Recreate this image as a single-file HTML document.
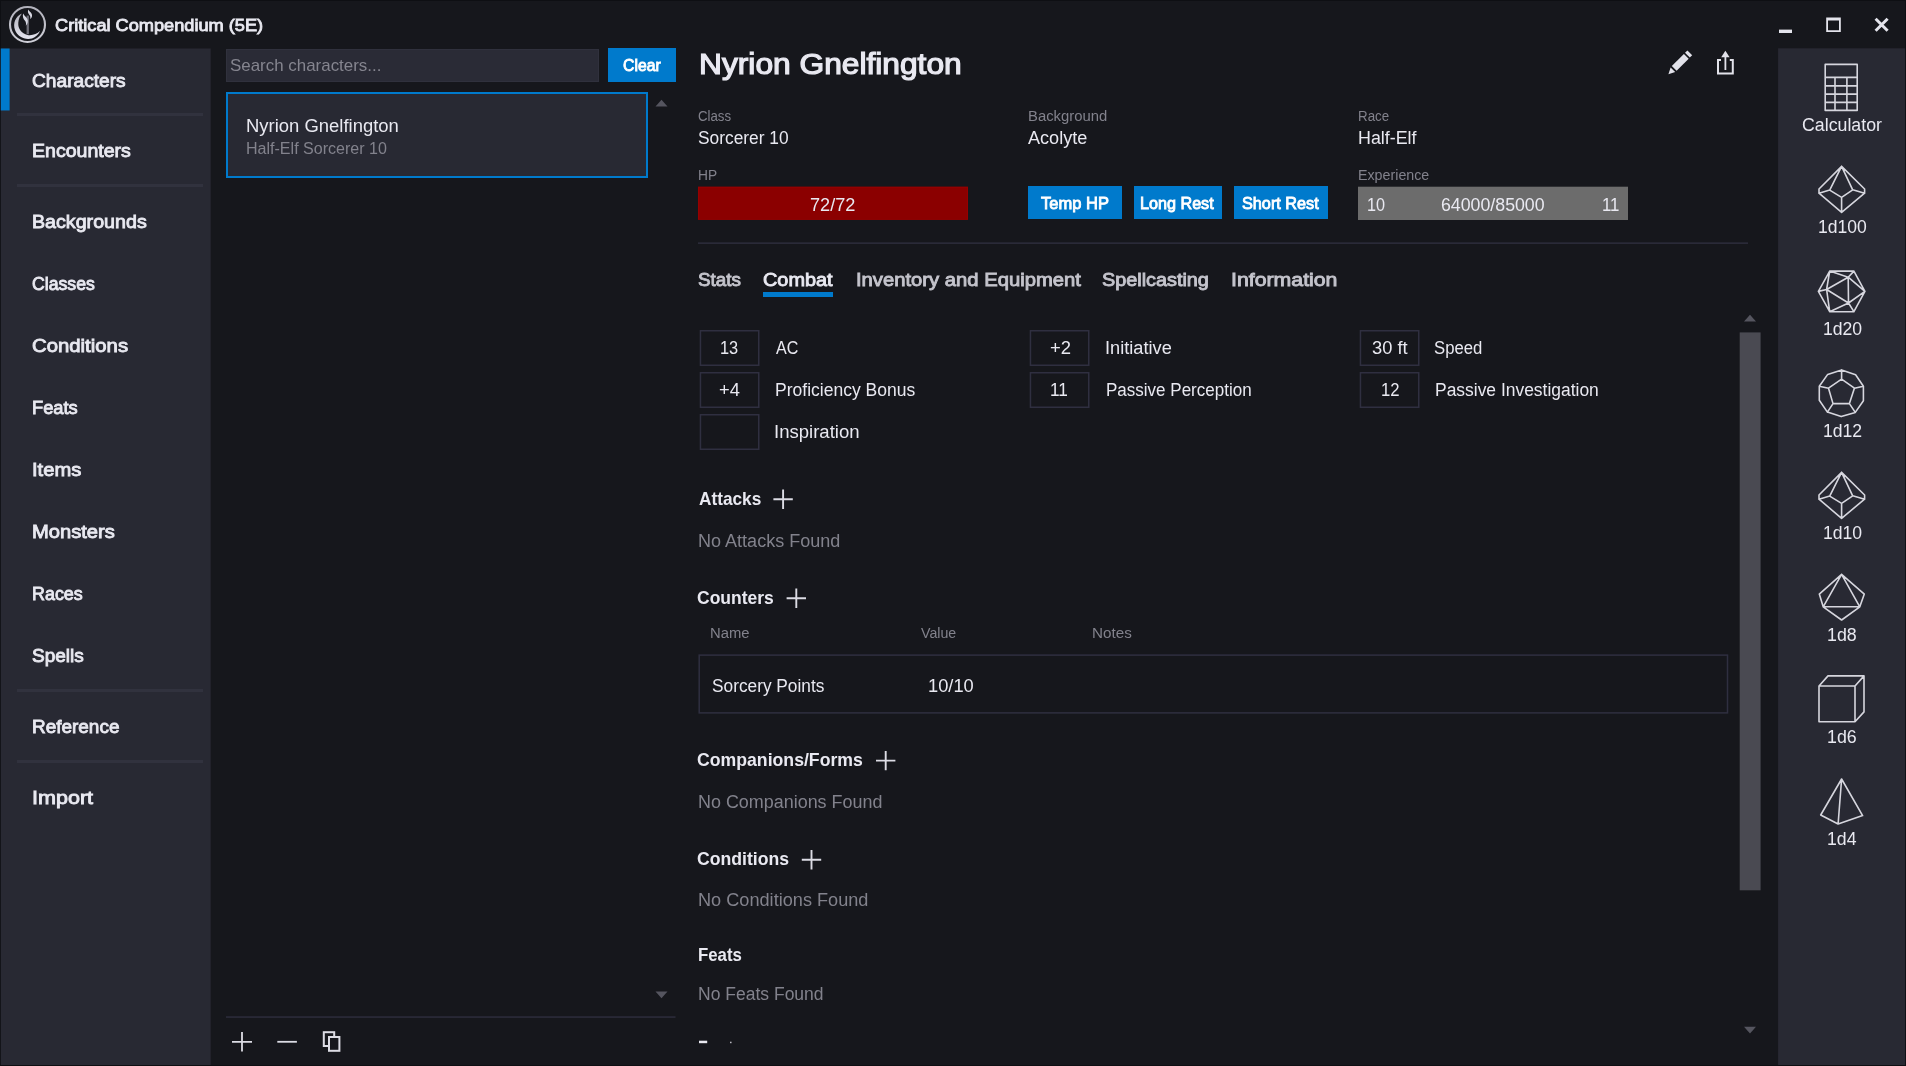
<!DOCTYPE html>
<html><head><meta charset="utf-8"><title>Critical Compendium (5E)</title>
<style>
html,body{margin:0;padding:0;}
body{width:1906px;height:1066px;overflow:hidden;background:#16171c;font-family:"Liberation Sans",sans-serif;position:relative;}
.t{position:absolute;white-space:nowrap;line-height:1;transform-origin:0 50%;}
#all{position:absolute;left:0;top:0;width:1906px;height:1066px;will-change:transform;}
.r{position:absolute;}
svg{position:absolute;left:0;top:0;overflow:visible;}
</style></head><body><div id="all">
<div class="r" style="left:0px;top:0px;width:1906px;height:1066px;border:1px solid #0e0f13;box-sizing:border-box;"></div>
<svg width="1906" height="1066" viewBox="0 0 1906 1066"><rect x="0.8" y="48.5" width="209.9" height="1016.5" fill="#282933"/><rect x="0.8" y="48.5" width="8.8" height="62" fill="#007acc"/><rect x="1778.1" y="48.3" width="127" height="1016.7" fill="#282933"/></svg>
<svg width="1906" height="1066" viewBox="0 0 1906 1066">
<defs><linearGradient id="lg" x1="0" y1="0" x2="0" y2="1"><stop offset="0" stop-color="#b4b4be"/><stop offset="1" stop-color="#e4e4ee"/></linearGradient>
<linearGradient id="lr" x1="0" y1="0" x2="0" y2="1"><stop offset="0" stop-color="#b2b2bc"/><stop offset="1" stop-color="#cfcfd8"/></linearGradient></defs>
<g id="logo">
<circle cx="27.5" cy="24.5" r="17.5" fill="none" stroke="url(#lr)" stroke-width="2.1"/>
<path d="M21.9 13.6 C 15.5 16.5, 12.6 23.5, 15 30 C 17.5 36.8, 25 40.2, 32 38.4 C 35.6 37.4, 38.6 34.6, 40.1 30.8 C 36.8 34.2, 32 35.8, 27.6 35 C 21.6 33.8, 17.8 28.6, 18.3 22.8 C 18.6 19, 20 16, 21.9 13.6 Z" fill="url(#lg)"/>
<rect x="26.6" y="15.6" width="2.3" height="18.6" fill="#6e6e78"/>
<path d="M23.2 13.6 C 22.2 16.5, 23.4 19, 24.8 20.6 C 26 22, 26.4 23.8, 25.8 25.8 C 28 23.8, 28.4 21, 27.2 18.8 C 26 16.8, 24.2 15.8, 23.2 13.6 Z" fill="#d8d8e2"/>
<path d="M28.3 9.6 C 27.3 12, 28.4 13.8, 29.6 15.2 C 30.4 16.2, 30.6 17.6, 30 19 C 32.2 17.6, 32.6 15.2, 31.5 13.4 C 30.4 11.8, 28.9 11.2, 28.3 9.6 Z" fill="#d8d8e2"/>
</g>
</svg>
<div class="t" style="left:54.56px;top:17.37px;font-size:17.4px;font-weight:400;color:#e9e9f1;transform:scaleX(1.0455);-webkit-text-stroke:0.85px #e9e9f1;">Critical Compendium (5E)</div>
<svg width="1906" height="1066" viewBox="0 0 1906 1066">
<rect x="1779" y="29.6" width="13" height="3.4" fill="#e4e4ec"/>
<path d="M1826.2 17.4 h14.6 v14.6 h-14.6 Z M1828 20.4 v9.8 h11 v-9.8 Z" fill="#e4e4ec" fill-rule="evenodd"/>
<path d="M1875.6 18.8 L1887.6 30.8 M1887.6 18.8 L1875.6 30.8" stroke="#e4e4ec" stroke-width="3" fill="none"/>
</svg>
<div class="t" style="left:32.10px;top:72.26px;font-size:18.4px;font-weight:400;color:#e9e9f1;transform:scaleX(1.0415);-webkit-text-stroke:0.85px #e9e9f1;">Characters</div>
<div class="t" style="left:31.79px;top:141.96px;font-size:18.4px;font-weight:400;color:#e9e9f1;transform:scaleX(1.0626);-webkit-text-stroke:0.85px #e9e9f1;">Encounters</div>
<div class="t" style="left:31.77px;top:212.74px;font-size:18.4px;font-weight:400;color:#e9e9f1;transform:scaleX(1.0686);-webkit-text-stroke:0.85px #e9e9f1;">Backgrounds</div>
<div class="t" style="left:32.20px;top:274.79px;font-size:18.4px;font-weight:400;color:#e9e9f1;transform:scaleX(0.9607);-webkit-text-stroke:0.85px #e9e9f1;">Classes</div>
<div class="t" style="left:32.03px;top:336.96px;font-size:18.4px;font-weight:400;color:#e9e9f1;transform:scaleX(1.1054);-webkit-text-stroke:0.85px #e9e9f1;">Conditions</div>
<div class="t" style="left:31.92px;top:399.26px;font-size:18.4px;font-weight:400;color:#e9e9f1;transform:scaleX(0.9945);-webkit-text-stroke:0.85px #e9e9f1;">Feats</div>
<div class="t" style="left:31.52px;top:460.96px;font-size:18.4px;font-weight:400;color:#e9e9f1;transform:scaleX(1.0969);-webkit-text-stroke:0.85px #e9e9f1;">Items</div>
<div class="t" style="left:31.72px;top:523.46px;font-size:18.4px;font-weight:400;color:#e9e9f1;transform:scaleX(1.0954);-webkit-text-stroke:0.85px #e9e9f1;">Monsters</div>
<div class="t" style="left:31.96px;top:584.97px;font-size:18.4px;font-weight:400;color:#e9e9f1;transform:scaleX(0.9731);-webkit-text-stroke:0.85px #e9e9f1;">Races</div>
<div class="t" style="left:32.07px;top:647.04px;font-size:18.4px;font-weight:400;color:#e9e9f1;transform:scaleX(1.0350);-webkit-text-stroke:0.85px #e9e9f1;">Spells</div>
<div class="t" style="left:31.88px;top:718.46px;font-size:18.4px;font-weight:400;color:#e9e9f1;transform:scaleX(1.0303);-webkit-text-stroke:0.85px #e9e9f1;">Reference</div>
<div class="t" style="left:32.03px;top:789.04px;font-size:18.4px;font-weight:400;color:#e9e9f1;transform:scaleX(1.1720);-webkit-text-stroke:0.85px #e9e9f1;">Import</div>
<div class="r" style="left:17px;top:113.2px;width:186px;height:3px;background:#31323e;"></div>
<div class="r" style="left:17px;top:184px;width:186px;height:3px;background:#31323e;"></div>
<div class="r" style="left:17px;top:689.2px;width:186px;height:3px;background:#31323e;"></div>
<div class="r" style="left:17px;top:760px;width:186px;height:3px;background:#31323e;"></div>
<div class="r" style="left:226px;top:49px;width:373px;height:32.5px;background:#2a2b36;border:1px solid #30313d;box-sizing:border-box;"></div>
<div class="t" style="left:230.28px;top:57.31px;font-size:17px;font-weight:400;color:#85858f;transform:scaleX(0.9954);">Search characters...</div>
<div class="r" style="left:608px;top:48px;width:67.6px;height:34px;background:#007acc;"></div>
<div class="t" style="left:622.82px;top:58.14px;font-size:16.6px;font-weight:400;color:#ffffff;transform:scaleX(0.9498);-webkit-text-stroke:0.85px #ffffff;">Clear</div>
<div class="r" style="left:226px;top:92.3px;width:422px;height:85.3px;background:#282933;border:2px solid #007acc;box-sizing:border-box;"></div>
<div class="t" style="left:245.80px;top:117.90px;font-size:17.6px;font-weight:400;color:#e9e9f1;transform:scaleX(1.0490);">Nyrion Gnelfington</div>
<div class="t" style="left:245.76px;top:141.06px;font-size:16px;font-weight:400;color:#82828c;transform:scaleX(1.0027);">Half-Elf Sorcerer 10</div>
<svg width="1906" height="1066" viewBox="0 0 1906 1066"><rect x="226" y="1016.3" width="449.5" height="1.5" fill="#2d2d3c"/><rect x="698" y="242.4" width="1050" height="1.5" fill="#2d2d3c"/></svg>
<svg width="1906" height="1066" viewBox="0 0 1906 1066">
<path d="M655.5 106.6 l6 -6.8 l6 6.8 Z" fill="#55555f"/>
<path d="M655.5 991.4 l6 6.8 l6 -6.8 Z" fill="#55555f"/>
<path d="M232 1041.8 h20 M242 1032 v19.6" stroke="#dcdce4" stroke-width="1.8" fill="none"/>
<path d="M277.3 1041.8 h19.6" stroke="#dcdce4" stroke-width="1.8" fill="none"/>
<rect x="323.8" y="1032.2" width="10.4" height="13.8" fill="none" stroke="#dcdce4" stroke-width="2"/>
<rect x="329" y="1037" width="10.4" height="13.8" fill="#16171c" stroke="#dcdce4" stroke-width="2"/>
</svg>
<div class="t" style="left:698.97px;top:49.89px;font-size:28.6px;font-weight:400;color:#e9e9f1;transform:scaleX(1.1093);-webkit-text-stroke:1.2px #e9e9f1;">Nyrion Gnelfington</div>
<svg width="1906" height="1066" viewBox="0 0 1906 1066">
<g fill="#e2e2ea">
<path d="M1668.4 74.2 L1670.6 67.4 L1675.2 72 Z"/>
<path d="M1671.8 66 L1683.9 53.9 L1688.7 58.7 L1676.6 70.8 Z"/>
<path d="M1685 52.8 L1687.4 50.5 L1692.2 55.2 L1689.8 57.6 Z"/>
</g>
<path d="M1721 60 h-3 v13.6 h14.8 v-13.6 h-3" fill="none" stroke="#e2e2ea" stroke-width="2"/>
<path d="M1725.4 70 v-14" stroke="#e2e2ea" stroke-width="1.8" fill="none"/>
<path d="M1721.2 57.2 L1725.4 50.8 L1729.6 57.2 Z" fill="#e2e2ea"/>
</svg>
<div class="t" style="left:697.71px;top:107.84px;font-size:15.4px;font-weight:400;color:#82828c;transform:scaleX(0.8599);">Class</div>
<div class="t" style="left:698.39px;top:130.00px;font-size:17.6px;font-weight:400;color:#e9e9f1;transform:scaleX(0.9851);">Sorcerer 10</div>
<div class="t" style="left:1028.22px;top:108.11px;font-size:15.4px;font-weight:400;color:#82828c;transform:scaleX(0.9644);">Background</div>
<div class="t" style="left:1027.85px;top:129.69px;font-size:17.6px;font-weight:400;color:#e9e9f1;transform:scaleX(1.0284);">Acolyte</div>
<div class="t" style="left:1357.56px;top:107.88px;font-size:15.4px;font-weight:400;color:#82828c;transform:scaleX(0.8672);">Race</div>
<div class="t" style="left:1357.88px;top:130.00px;font-size:17.6px;font-weight:400;color:#e9e9f1;transform:scaleX(1.0145);">Half-Elf</div>
<div class="t" style="left:698.33px;top:166.83px;font-size:15.4px;font-weight:400;color:#82828c;transform:scaleX(0.8935);">HP</div>
<div class="t" style="left:1358.28px;top:167.01px;font-size:15.4px;font-weight:400;color:#82828c;transform:scaleX(0.9256);">Experience</div>
<svg width="1906" height="1066" viewBox="0 0 1906 1066"><rect x="698" y="186.6" width="270" height="33.3" fill="#960000"/><rect x="699" y="187.8" width="268" height="31.2" fill="#8b0000"/><rect x="1358" y="186.7" width="270" height="33.3" fill="#6c6c6c"/></svg>
<div class="t" style="left:809.56px;top:196.79px;font-size:17.6px;font-weight:400;color:#e9e9f1;transform:scaleX(1.0315);">72/72</div>
<div class="r" style="left:1028px;top:186px;width:94px;height:33px;background:#007acc;"></div>
<div class="t" style="left:1041.34px;top:195.62px;font-size:16.6px;font-weight:400;color:#ffffff;transform:scaleX(0.9954);-webkit-text-stroke:0.85px #ffffff;">Temp HP</div>
<div class="r" style="left:1134px;top:186px;width:88px;height:33px;background:#007acc;"></div>
<div class="t" style="left:1140.39px;top:195.62px;font-size:16.6px;font-weight:400;color:#ffffff;transform:scaleX(0.9743);-webkit-text-stroke:0.85px #ffffff;">Long Rest</div>
<div class="r" style="left:1234px;top:186px;width:94px;height:33px;background:#007acc;"></div>
<div class="t" style="left:1242.33px;top:195.73px;font-size:16.6px;font-weight:400;color:#ffffff;transform:scaleX(0.9791);-webkit-text-stroke:0.85px #ffffff;">Short Rest</div>
<div class="t" style="left:1366.78px;top:196.70px;font-size:17.6px;font-weight:400;color:#e9e9f1;transform:scaleX(0.9223);">10</div>
<div class="t" style="left:1441.11px;top:196.79px;font-size:17.6px;font-weight:400;color:#e9e9f1;transform:scaleX(1.0085);">64000/85000</div>
<div class="t" style="left:1601.53px;top:196.70px;font-size:17.6px;font-weight:400;color:#e9e9f1;transform:scaleX(0.9568);">11</div>
<div class="t" style="left:698.14px;top:271.44px;font-size:18px;font-weight:400;color:#c4c4cc;transform:scaleX(1.0472);-webkit-text-stroke:0.85px #c4c4cc;">Stats</div>
<div class="t" style="left:762.67px;top:271.44px;font-size:18px;font-weight:400;color:#e9e9f1;transform:scaleX(1.1040);-webkit-text-stroke:0.85px #e9e9f1;">Combat</div>
<div class="t" style="left:855.94px;top:271.44px;font-size:18px;font-weight:400;color:#c4c4cc;transform:scaleX(1.1238);-webkit-text-stroke:0.85px #c4c4cc;">Inventory and Equipment</div>
<div class="t" style="left:1102.32px;top:271.44px;font-size:18px;font-weight:400;color:#c4c4cc;transform:scaleX(1.1012);-webkit-text-stroke:0.85px #c4c4cc;">Spellcasting</div>
<div class="t" style="left:1230.62px;top:271.44px;font-size:18px;font-weight:400;color:#c4c4cc;transform:scaleX(1.1823);-webkit-text-stroke:0.85px #c4c4cc;">Information</div>
<div class="r" style="left:763px;top:292px;width:70px;height:5px;background:#007acc;"></div>
<svg width="1906" height="1066" viewBox="0 0 1906 1066"><g fill="none" stroke="#2f2f40" stroke-width="1.5"><rect x="700.45" y="330.75" width="58.3" height="34.5"/><rect x="700.45" y="372.75" width="58.3" height="34.5"/><rect x="700.45" y="414.75" width="58.3" height="34.5"/><rect x="1030.45" y="330.75" width="58.3" height="34.5"/><rect x="1030.45" y="372.75" width="58.3" height="34.5"/><rect x="1360.45" y="330.75" width="58.3" height="34.5"/><rect x="1360.45" y="372.75" width="58.3" height="34.5"/><rect x="699.2" y="655.1" width="1028.3" height="57.8"/></g></svg>
<div class="t" style="left:720.32px;top:339.75px;font-size:17.6px;font-weight:400;color:#e9e9f1;transform:scaleX(0.9310);">13</div>
<div class="t" style="left:775.67px;top:339.75px;font-size:17.6px;font-weight:400;color:#e9e9f1;transform:scaleX(0.9129);">AC</div>
<div class="t" style="left:719.27px;top:382.15px;font-size:17.6px;font-weight:400;color:#e9e9f1;transform:scaleX(1.0389);">+4</div>
<div class="t" style="left:774.83px;top:382.15px;font-size:17.6px;font-weight:400;color:#e9e9f1;transform:scaleX(0.9961);">Proficiency Bonus</div>
<div class="t" style="left:773.96px;top:424.15px;font-size:17.6px;font-weight:400;color:#e9e9f1;transform:scaleX(1.0543);">Inspiration</div>
<div class="t" style="left:1049.85px;top:339.75px;font-size:17.6px;font-weight:400;color:#e9e9f1;transform:scaleX(1.0488);">+2</div>
<div class="t" style="left:1105.39px;top:339.75px;font-size:17.6px;font-weight:400;color:#e9e9f1;transform:scaleX(1.0347);">Initiative</div>
<div class="t" style="left:1050.24px;top:382.15px;font-size:17.6px;font-weight:400;color:#e9e9f1;transform:scaleX(0.9809);">11</div>
<div class="t" style="left:1105.70px;top:382.15px;font-size:17.6px;font-weight:400;color:#e9e9f1;transform:scaleX(0.9669);">Passive Perception</div>
<div class="t" style="left:1371.93px;top:339.75px;font-size:17.6px;font-weight:400;color:#e9e9f1;transform:scaleX(1.0388);">30 ft</div>
<div class="t" style="left:1434.19px;top:339.75px;font-size:17.6px;font-weight:400;color:#e9e9f1;transform:scaleX(0.9488);">Speed</div>
<div class="t" style="left:1380.56px;top:382.15px;font-size:17.6px;font-weight:400;color:#e9e9f1;transform:scaleX(0.9468);">12</div>
<div class="t" style="left:1435.12px;top:382.15px;font-size:17.6px;font-weight:400;color:#e9e9f1;transform:scaleX(0.9909);">Passive Investigation</div>
<div class="t" style="left:698.74px;top:490.53px;font-size:17.8px;font-weight:700;color:#e9e9f1;transform:scaleX(0.9685);">Attacks</div>
<div class="t" style="left:698.27px;top:533.18px;font-size:17.6px;font-weight:400;color:#82828c;transform:scaleX(1.0248);">No Attacks Found</div>
<div class="t" style="left:697.29px;top:590.13px;font-size:17.8px;font-weight:700;color:#e9e9f1;transform:scaleX(0.9835);">Counters</div>
<div class="t" style="left:709.74px;top:625.36px;font-size:15.4px;font-weight:400;color:#82828c;transform:scaleX(0.9625);">Name</div>
<div class="t" style="left:920.80px;top:625.37px;font-size:15.4px;font-weight:400;color:#82828c;transform:scaleX(0.9220);">Value</div>
<div class="t" style="left:1092.10px;top:625.36px;font-size:15.4px;font-weight:400;color:#82828c;transform:scaleX(0.9893);">Notes</div>
<div class="t" style="left:711.65px;top:677.99px;font-size:17.6px;font-weight:400;color:#e9e9f1;transform:scaleX(0.9820);">Sorcery Points</div>
<div class="t" style="left:928.15px;top:677.99px;font-size:17.6px;font-weight:400;color:#e9e9f1;transform:scaleX(1.0390);">10/10</div>
<div class="t" style="left:697.40px;top:752.03px;font-size:17.8px;font-weight:700;color:#e9e9f1;transform:scaleX(0.9933);">Companions/Forms</div>
<div class="t" style="left:697.63px;top:794.29px;font-size:17.6px;font-weight:400;color:#82828c;transform:scaleX(1.0192);">No Companions Found</div>
<div class="t" style="left:697.41px;top:851.43px;font-size:17.8px;font-weight:700;color:#e9e9f1;transform:scaleX(0.9911);">Conditions</div>
<div class="t" style="left:697.57px;top:892.34px;font-size:17.6px;font-weight:400;color:#82828c;transform:scaleX(1.0313);">No Conditions Found</div>
<div class="t" style="left:697.94px;top:946.83px;font-size:17.8px;font-weight:700;color:#e9e9f1;transform:scaleX(0.9440);">Feats</div>
<div class="t" style="left:697.80px;top:986.30px;font-size:17.6px;font-weight:400;color:#82828c;transform:scaleX(0.9956);">No Feats Found</div>
<svg width="1906" height="1066" viewBox="0 0 1906 1066"><rect x="699" y="1040.7" width="8.2" height="2.5" fill="#e9e9f1"/><rect x="730.1" y="1041.7" width="1.4" height="1.5" fill="#c9c9d1"/></svg>
<svg width="1906" height="1066" viewBox="0 0 1906 1066"><path d="M773.4 499.2 h19.4 M783.1 489.5 v19.4" stroke="#dcdce4" stroke-width="1.9" fill="none"/><path d="M786.5999999999999 598.2 h19.4 M796.3 588.5 v19.4" stroke="#dcdce4" stroke-width="1.9" fill="none"/><path d="M876.0 760.6 h19.4 M885.7 750.9 v19.4" stroke="#dcdce4" stroke-width="1.9" fill="none"/><path d="M801.8 859.8 h19.4 M811.5 850.0999999999999 v19.4" stroke="#dcdce4" stroke-width="1.9" fill="none"/></svg>
<svg width="1906" height="1066" viewBox="0 0 1906 1066"><rect x="1739.7" y="332.4" width="20.9" height="557.9" fill="#4a4a52"/></svg>
<svg width="1906" height="1066" viewBox="0 0 1906 1066">
<path d="M1744 321.6 l6 -6.8 l6 6.8 Z" fill="#55555f"/>
<path d="M1744 1026.8 l6 6.8 l6 -6.8 Z" fill="#55555f"/>
</svg>
<div class="t" style="left:1801.90px;top:116.90px;font-size:17.6px;font-weight:400;color:#e9e9f1;transform:scaleX(1.0089);">Calculator</div>
<div class="t" style="left:1817.60px;top:218.50px;font-size:17.6px;font-weight:400;color:#e9e9f1;transform:scaleX(0.9983);">1d100</div>
<div class="t" style="left:1822.76px;top:320.50px;font-size:17.6px;font-weight:400;color:#e9e9f1;transform:scaleX(0.9999);">1d20</div>
<div class="t" style="left:1822.73px;top:422.50px;font-size:17.6px;font-weight:400;color:#e9e9f1;transform:scaleX(1.0004);">1d12</div>
<div class="t" style="left:1822.76px;top:524.50px;font-size:17.6px;font-weight:400;color:#e9e9f1;transform:scaleX(0.9999);">1d10</div>
<div class="t" style="left:1827.10px;top:626.50px;font-size:17.6px;font-weight:400;color:#e9e9f1;transform:scaleX(1.0124);">1d8</div>
<div class="t" style="left:1827.10px;top:728.50px;font-size:17.6px;font-weight:400;color:#e9e9f1;transform:scaleX(1.0119);">1d6</div>
<div class="t" style="left:1827.15px;top:830.50px;font-size:17.6px;font-weight:400;color:#e9e9f1;transform:scaleX(1.0039);">1d4</div>
<svg width="1906" height="1066" viewBox="0 0 1906 1066"><path d="M1825.2 64.4 h32 v46 h-32 Z M1825.2 77.4 h32 M1825.2 85.9 h32 M1825.2 94.1 h32 M1825.2 102.4 h32 M1835 77.4 v33 M1846.9 77.4 v33 M1841.6 166.4 L1864.6 189.0 L1864.6 193.2 L1841.6 212.3 L1819.0 193.2 L1819.0 189.0 Z M1841.6 166.4 L1829.7 190.1 M1841.6 166.4 L1852.7 189.8 M1829.7 190.1 L1841.6 197.4 M1852.7 189.8 L1841.6 197.4 M1841.6 197.4 L1841.6 212.3 M1819.0 193.2 L1829.7 190.1 M1864.6 193.2 L1852.7 189.8 M1841.6 472.4 L1864.6 495.0 L1864.6 499.2 L1841.6 518.3 L1819.0 499.2 L1819.0 495.0 Z M1841.6 472.4 L1829.7 496.1 M1841.6 472.4 L1852.7 495.8 M1829.7 496.1 L1841.6 503.4 M1852.7 495.8 L1841.6 503.4 M1841.6 503.4 L1841.6 518.3 M1819.0 499.2 L1829.7 496.1 M1864.6 499.2 L1852.7 495.8 M1829.7 271.1 L1853.9 271.1 L1864.9 291.4 L1853.9 311.7 L1829.7 311.7 L1818.4 291.4 Z M1848.2 277.2 L1826.6 289.5 L1848.5 303.0 Z M1848.2 277.2 L1829.7 271.1 M1848.2 277.2 L1853.9 271.1 M1848.2 277.2 L1864.9 291.4 M1826.6 289.5 L1829.7 271.1 M1826.6 289.5 L1818.4 291.4 M1826.6 289.5 L1829.7 311.7 M1848.5 303.0 L1829.7 311.7 M1848.5 303.0 L1853.9 311.7 M1848.5 303.0 L1864.9 291.4 M1841.6 369.9 L1855.6 374.7 L1863.4 386.2 L1863.4 400.8 L1855.3 412.4 L1841.2 416.6 L1827.4 412.1 L1819.3 400.3 L1819.3 386.2 L1827.7 374.4 Z M1841.6 379.2 L1854.4 388.2 L1849.4 403.6 L1833.0 403.6 L1828.5 388.2 Z M1841.6 379.2 L1841.6 369.9 M1854.4 388.2 L1863.4 386.2 M1849.4 403.6 L1855.3 412.4 M1833.0 403.6 L1827.4 412.1 M1828.5 388.2 L1819.3 386.2 M1841.6 574.4 L1864.3 594.1 L1859.8 606.8 L1841.6 620.0 L1823.2 606.8 L1819.3 594.1 Z M1841.6 574.4 L1859.8 606.8 L1823.2 606.8 Z M1819 686 h36 v35.7 h-36 Z M1819 686 L1828 675.9 h36 L1855 686 M1864 675.9 v36 L1855 721.7 M1841.6 779.0 L1820.7 815.0 L1838.1 824.0 L1862.6 815.6 Z M1841.6 779.0 L1838.1 824.0" fill="none" stroke="#d6d6de" stroke-width="1.6" stroke-linejoin="round" stroke-linecap="round"/></svg>
</div></body></html>
